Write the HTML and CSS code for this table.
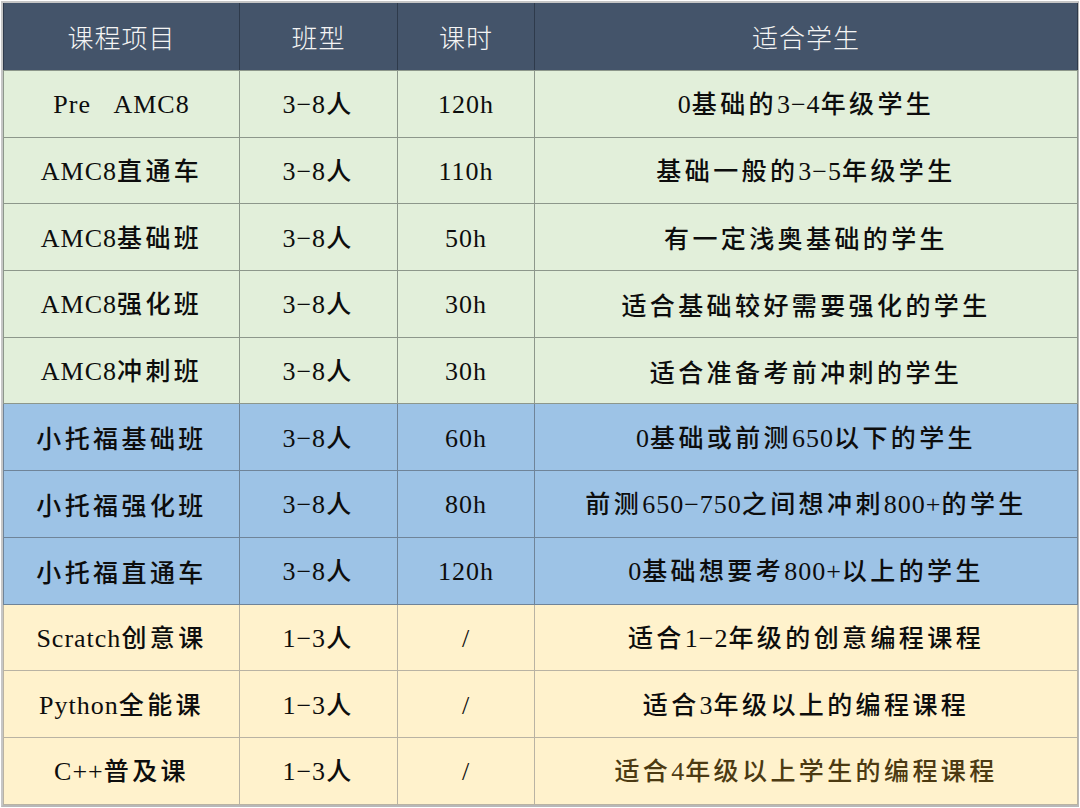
FILE: index.html
```html
<!DOCTYPE html>
<html lang="zh-CN">
<head>
<meta charset="utf-8">
<title>课程项目</title>
<link rel="stylesheet" href="styles.css">
</head>
<body>
<div class="frame">
  <table class="courses">
    <colgroup>
      <col class="c1"><col class="c2"><col class="c3"><col class="c4">
    </colgroup>
    <thead>
      <tr><th>课程项目</th><th>班型</th><th>课时</th><th>适合学生</th></tr>
    </thead>
    <tbody>
      <tr class="amc"><td><span class="en">Pre&nbsp;&nbsp;&nbsp;AMC8</span></td><td><span class="en">3−8</span>人</td><td><span class="en">120h</span></td><td><span class="en">0</span>基础的<span class="en">3−4</span>年级学生</td></tr>
      <tr class="amc"><td><span class="en">AMC8</span>直通车</td><td><span class="en">3−8</span>人</td><td><span class="en">110h</span></td><td>基础一般的<span class="en">3−5</span>年级学生</td></tr>
      <tr class="amc"><td><span class="en">AMC8</span>基础班</td><td><span class="en">3−8</span>人</td><td><span class="en">50h</span></td><td>有一定浅奥基础的学生</td></tr>
      <tr class="amc"><td><span class="en">AMC8</span>强化班</td><td><span class="en">3−8</span>人</td><td><span class="en">30h</span></td><td>适合基础较好需要强化的学生</td></tr>
      <tr class="amc"><td><span class="en">AMC8</span>冲刺班</td><td><span class="en">3−8</span>人</td><td><span class="en">30h</span></td><td>适合准备考前冲刺的学生</td></tr>
      <tr class="toefl"><td>小托福基础班</td><td><span class="en">3−8</span>人</td><td><span class="en">60h</span></td><td><span class="en">0</span>基础或前测<span class="en">650</span>以下的学生</td></tr>
      <tr class="toefl"><td>小托福强化班</td><td><span class="en">3−8</span>人</td><td><span class="en">80h</span></td><td>前测<span class="en">650−750</span>之间想冲刺<span class="en">800+</span>的学生</td></tr>
      <tr class="toefl"><td>小托福直通车</td><td><span class="en">3−8</span>人</td><td><span class="en">120h</span></td><td><span class="en">0</span>基础想要考<span class="en">800+</span>以上的学生</td></tr>
      <tr class="code"><td><span class="en">Scratch</span>创意课</td><td><span class="en">1−3</span>人</td><td><span class="en">/</span></td><td>适合<span class="en">1−2</span>年级的创意编程课程</td></tr>
      <tr class="code"><td><span class="en">Python</span>全能课</td><td><span class="en">1−3</span>人</td><td><span class="en">/</span></td><td>适合<span class="en">3</span>年级以上的编程课程</td></tr>
      <tr class="code"><td><span class="en">C++</span>普及课</td><td><span class="en">1−3</span>人</td><td><span class="en">/</span></td><td class="last">适合<span class="en">4</span>年级以上学生的编程课程</td></tr>
    </tbody>
  </table>
</div>
</body>
</html>
```

FILE: styles.css
```css
html, body {
  margin: 0;
  padding: 0;
  background: #ffffff;
}

.frame {
  width: 1074px;
  margin: 1px 0 0 1px;
  border: 2px solid #c6c6c6;
  border-right-color: #b8b8b8;
  border-bottom-color: #b8b8b8;
}

.courses {
  width: 1074px;
  border-collapse: collapse;
  table-layout: fixed;
  font-family: "Noto Sans CJK SC", sans-serif;
  color: #0d0d0d;
}

.c1 { width: 236px; }
.c2 { width: 158px; }
.c3 { width: 137px; }
.c4 { width: 543px; }

.courses th {
  height: 67px;
  padding: 0;
  background: #44546a;
  color: #f4f4f4;
  font-family: "Noto Sans CJK SC", sans-serif;
  font-weight: 300;
  font-size: 26px;
  letter-spacing: 1px;
  border-left: 1px solid #2e3a4b;
  border-right: 1px solid #2e3a4b;
  border-bottom: 1px solid #8d978b;
  text-align: center;
  vertical-align: middle;
}

.courses td {
  height: 65.7px;
  padding: 0;
  font-size: 25px;
  font-weight: 500;
  letter-spacing: 3.4px;
  text-align: center;
  vertical-align: middle;
  border: 1px solid #8d978b;
  white-space: nowrap;
  line-height: 30px;
}

.en {
  font-family: "Liberation Serif", serif;
  font-weight: 400;
  font-size: 26px;
  letter-spacing: 1px;
}

.amc td { background: #e2efda; }
.toefl td { background: #9dc3e6; border-color: #6f8499; }
.code td { background: #fff2cc; border-color: #b9b3a3; }

.courses td.last { color: #4c3a12; }
```
